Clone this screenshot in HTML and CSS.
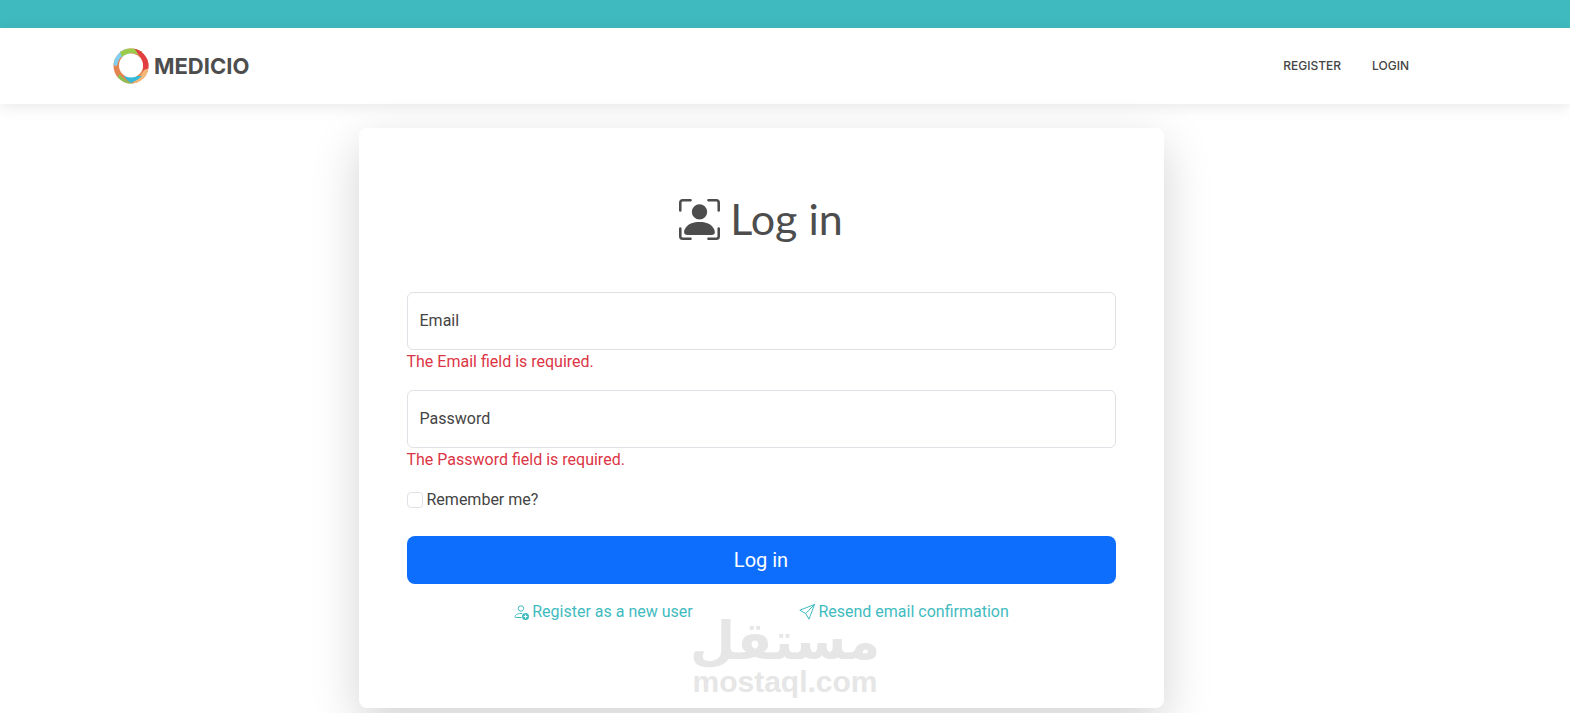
FILE: index.html
```html
<!DOCTYPE html>
<html lang="en">
<head>
<meta charset="UTF-8">
<meta name="viewport" content="width=device-width, initial-scale=1.0">
<title>Log in - Medicio</title>
<link rel="stylesheet" href="styles.css">
</head>
<body>
<div class="topbar"></div>
<header class="header">
  <div class="container">
    <a href="#" class="logo">
      <svg width="36" height="36" viewBox="0 0 36 36" aria-hidden="true">
        <clipPath id="ring"><circle cx="18" cy="18" r="17.500"/></clipPath>
        <g clip-path="url(#ring)">
          <path d="M0 0h36v36H0z" fill="#e58451"/>
          <path d="M0 17 L0 4 L14 0 L18 8 L8 9 Q5 12 4 18z" fill="#7fd0f0"/>
          <path d="M7 4 L14 0 H30 L28 8 Q18 2 9 9z" fill="#9ccb4c"/>
          <path d="M21 0 H36 V22 L29 29 Q32 18 28 10z" fill="#e23d42"/>
          <path d="M36 20 L34 30 L22 36 L20 34 Q27 30 31 22z" fill="#f3b878"/>
          <path d="M6 26 Q12 33 21 36 H10 L4 32z" fill="#8cc152"/>
          <path d="M11 28 L29 28 Q24 33 18 35 Q13 32 11 28z" fill="#35b9d6"/>
        </g>
        <circle cx="18" cy="17.500" r="12" fill="#fff"/>
      </svg>
      <span>MEDICIO</span>
    </a>
    <nav class="navbar">
      <a href="#">REGISTER</a>
      <a href="#">LOGIN</a>
    </nav>
  </div>
</header>
<main class="main">
  <section class="card">
    <h1>
      <svg width="41" height="41" viewBox="0 0 16 16" fill="currentColor" aria-hidden="true">
        <path d="M1.500 1a.5.5 0 0 0-.5.5v3a.5.5 0 0 1-1 0v-3A1.500 1.500 0 0 1 1.500 0h3a.5.5 0 0 1 0 1zM11 .5a.5.5 0 0 1 .5-.5h3A1.500 1.500 0 0 1 16 1.500v3a.5.5 0 0 1-1 0v-3a.5.5 0 0 0-.5-.5h-3a.5.5 0 0 1-.5-.5M.5 11a.5.5 0 0 1 .5.5v3a.5.5 0 0 0 .5.5h3a.5.5 0 0 1 0 1h-3A1.500 1.500 0 0 1 0 14.500v-3a.5.5 0 0 1 .5-.5m15 0a.5.5 0 0 1 .5.5v3a1.500 1.500 0 0 1-1.500 1.500h-3a.5.5 0 0 1 0-1h3a.5.5 0 0 0 .5-.5v-3a.5.5 0 0 1 .5-.5"/>
        <path d="M3 14s-1 0-1-1 1-4 6-4 6 3 6 4-1 1-1 1zm8-9a3 3 0 1 1-6 0 3 3 0 0 1 6 0"/>
      </svg>
      <span>Log in</span>
    </h1>
    <form>
      <div class="form-floating">
        <input type="email" id="email">
        <label for="email">Email</label>
      </div>
      <span class="text-danger">The Email field is required.</span>
      <div class="form-floating">
        <input type="password" id="password">
        <label for="password">Password</label>
      </div>
      <span class="text-danger">The Password field is required.</span>
      <div class="checkbox">
        <input type="checkbox" id="remember">
        <label for="remember">Remember me?</label>
      </div>
      <button type="submit" class="btn">Log in</button>
    </form>
    <div class="links">
      <a href="#">
        <svg width="16" height="16" viewBox="0 0 16 16" fill="none" stroke="currentColor" aria-hidden="true">
          <circle cx="8" cy="4.500" r="2.700"/>
          <path d="M8.500 13.500H3c-.7 0-1-.2-1-.7 0-1.300 1.500-3.300 6-3.300.5 0 .9 0 1.300.1"/>
          <circle cx="12.500" cy="12.500" r="3.500" fill="currentColor" stroke="none"/>
          <path d="M12.500 10.700v3.600M10.700 12.500h3.600" stroke="#fff"/>
        </svg>
        Register as a new user
      </a>
      <a href="#">
        <svg width="16" height="16" viewBox="0 0 16 16" fill="none" stroke="currentColor" stroke-linejoin="round" aria-hidden="true">
          <path d="M15.500.5 10 15.200 6.700 9.500.8 6.200zM15.500.5 6.700 9.500"/>
        </svg>
        Resend email confirmation
      </a>
    </div>
  </section>
</main>
<div class="watermark">
  <span class="watermark-ar" lang="ar">مستقل</span>
  <span class="watermark-en">mostaql.com</span>
</div>
</body>
</html>
```

FILE: styles.css
```css
* {
  box-sizing: border-box;
}

body {
  margin: 0;
  font-family: Roboto, sans-serif;
  font-size: 16px;
  line-height: 24px;
  color: #444;
  background-color: #fff;
}

a {
  color: #3fbbc0;
  text-decoration: none;
}

.topbar {
  height: 28px;
  background-color: #3fbbc0;
}

.header {
  padding-right: 48px;
  background-color: #fff;
  box-shadow: 0 2px 15px rgba(0, 0, 0, 0.1);
}

.container {
  display: flex;
  align-items: center;
  justify-content: space-between;
  max-width: 1320px;
  margin: 0 auto;
  padding: 20px 12px;
}

.logo {
  display: flex;
  align-items: center;
  gap: 5px;
  height: 36px;
  font-family: Inter, sans-serif;
  font-size: 22px;
  font-weight: 700;
  color: #4d4d4d;
}

.navbar {
  display: flex;
  gap: 31px;
}

.navbar a {
  font-family: Inter, sans-serif;
  font-size: 12px;
  font-weight: 500;
  color: #444;
}

.main {
  padding: 24px 48px 5px 0;
}

.card {
  max-width: 805px;
  margin: 0 auto;
  padding: 48px 48px 84px;
  border-radius: 8px;
  background-color: #fff;
  box-shadow: 0 16px 48px rgba(0, 0, 0, 0.175);
}

h1 {
  display: flex;
  align-items: center;
  justify-content: center;
  gap: 10px;
  margin: 16px 0 46px;
  font-family: Lato, sans-serif;
  font-size: 43px;
  font-weight: 400;
  line-height: 54px;
  color: #4d4d4d;
}

.form-floating {
  position: relative;
}

.form-floating input {
  display: block;
  width: 100%;
  height: 58px;
  padding: 16px 12px;
  border: 1px solid #dee2e6;
  border-radius: 6px;
  font: inherit;
  color: #444;
}

/* label lies over the empty input */
.form-floating label {
  position: absolute;
  top: 0;
  left: 0;
  padding: 17px 13px;
}

.text-danger {
  display: block;
  margin-bottom: 16px;
  color: #dc3545;
}

.checkbox {
  display: flex;
  align-items: center;
  gap: 4px;
  margin-bottom: 24px;
}

.checkbox input {
  appearance: none;
  width: 16px;
  height: 16px;
  margin: 0;
  border: 1px solid #dee2e6;
  border-radius: 4px;
  background-color: #fff;
}

.checkbox input:checked {
  background-color: #0d6efd;
}

.btn {
  display: block;
  width: 100%;
  height: 48px;
  border: none;
  border-radius: 8px;
  font-family: inherit;
  font-size: 20px;
  color: #fff;
  background-color: #0d6efd;
  cursor: pointer;
}

.links {
  display: flex;
  flex-wrap: wrap;
  justify-content: space-evenly;
  margin-top: 16px;
}

.links a {
  display: flex;
  align-items: center;
  gap: 3px;
}

.watermark {
  position: absolute;
  top: 616px;
  left: 0;
  right: 0;
  z-index: 1;
  display: flex;
  flex-direction: column;
  align-items: center;
  color: #e6e6e6;
  pointer-events: none;
}

.watermark-ar {
  font-family: "DejaVu Sans", sans-serif;
  font-size: 52px;
  font-weight: 700;
  line-height: 50px;
}

.watermark-en {
  font-family: "Liberation Sans", sans-serif;
  font-size: 30px;
  font-weight: 700;
  line-height: 32px;
}
```
